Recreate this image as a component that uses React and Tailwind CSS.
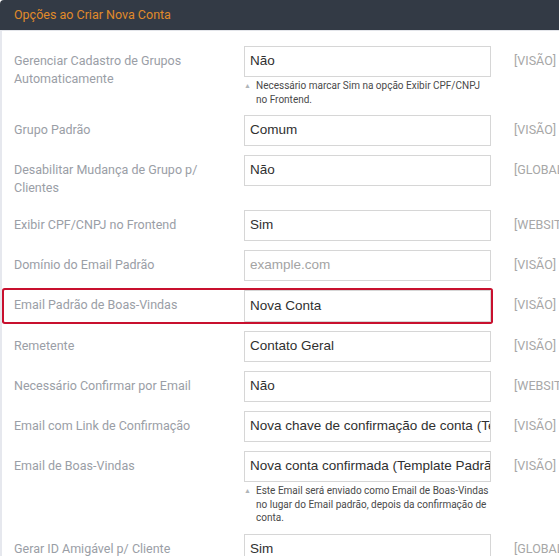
const rows = [
  {
    label: ['Gerenciar Cadastro de Grupos', 'Automaticamente'],
    value: 'Não',
    scope: '[VISÃO]',
    help: ['Necessário marcar Sim na opção Exibir CPF/CNPJ', 'no Frontend.'],
  },
  { label: ['Grupo Padrão'], value: 'Comum', scope: '[VISÃO]' },
  { label: ['Desabilitar Mudança de Grupo p/', 'Clientes'], value: 'Não', scope: '[GLOBAL]' },
  { label: ['Exibir CPF/CNPJ no Frontend'], value: 'Sim', scope: '[WEBSITE]' },
  { label: ['Domínio do Email Padrão'], placeholder: 'example.com', scope: '[VISÃO]' },
  { label: ['Email Padrão de Boas-Vindas'], value: 'Nova Conta', scope: '[VISÃO]', active: true },
  { label: ['Remetente'], value: 'Contato Geral', scope: '[VISÃO]' },
  { label: ['Necessário Confirmar por Email'], value: 'Não', scope: '[WEBSITE]' },
  { label: ['Email com Link de Confirmação'], value: 'Nova chave de confirmação de conta (Template Padrão)', scope: '[VISÃO]' },
  {
    label: ['Email de Boas-Vindas'],
    value: 'Nova conta confirmada (Template Padrão)',
    scope: '[VISÃO]',
    help: ['Este Email será enviado como Email de Boas-Vindas', 'no lugar do Email padrão, depois da confirmação de', 'conta.'],
  },
  { label: ['Gerar ID Amigável p/ Cliente'], value: 'Sim', scope: '[GLOBAL]' },
]

const Row = ({ row }) => (
  <div className="flex items-start mb-[9px]">
    <div
      className={`flex items-start w-[487px] shrink-0 ${
        row.active ? 'rounded-[1px] ring-2 ring-[#c8102e]' : ''
      }`}
    >
      <div className="w-[240px] shrink-0 pl-[10px] pr-2 pt-[6px] pb-[4px] text-[12.5px] leading-[18px] text-[#9a9ea6]">
        {row.label.map((l, i) => (
          <div key={i}>{l}</div>
        ))}
      </div>
      <div className="w-[247px] shrink-0">
        <div
          className={`border border-[#d6d6d6] bg-white pl-[5px] flex items-center overflow-hidden whitespace-nowrap text-[13.5px] ${
            row.placeholder ? 'text-[#a4a4a4]' : 'text-[#303030]'
          } ${row.active ? 'h-[32px]' : 'h-[31px]'}`}
          style={{ fontFamily: '"Liberation Sans", Arial, sans-serif' }}
        >
          {row.value || row.placeholder}
        </div>
        {row.help && (
          <div className="relative pl-[12px] pt-[2px] text-[10px] leading-[13.5px] text-[#4a4a4a]">
            <span className="absolute left-0 top-[3px] text-[7px] text-[#b0b4b8]">▲</span>
            {row.help.map((h, i) => (
              <div key={i}>{h}</div>
            ))}
          </div>
        )}
      </div>
    </div>
    <div className="pl-[23px] pt-[6px] text-[12.5px] leading-[18px] text-[#a7a7a7] whitespace-nowrap">
      {row.scope}
    </div>
  </div>
)

export default function App() {
  return (
    <div className="w-[559px] h-[556px] overflow-hidden bg-white" style={{ fontFamily: 'Roboto, "Noto Sans", sans-serif' }}>
      <div className="h-[31px] bg-[#333a45] rounded-tl-[4px] border-b border-[#e3e5ea] flex items-center pl-[14px] text-[12.5px] text-[#e08a2a]">
        Opções ao Criar Nova Conta
      </div>
      <div className="border-l-2 border-[#e6e8ee] pl-[2px] pt-[15px]">
        {rows.map((row, i) => (
          <Row key={i} row={row} />
        ))}
      </div>
    </div>
  )
}
